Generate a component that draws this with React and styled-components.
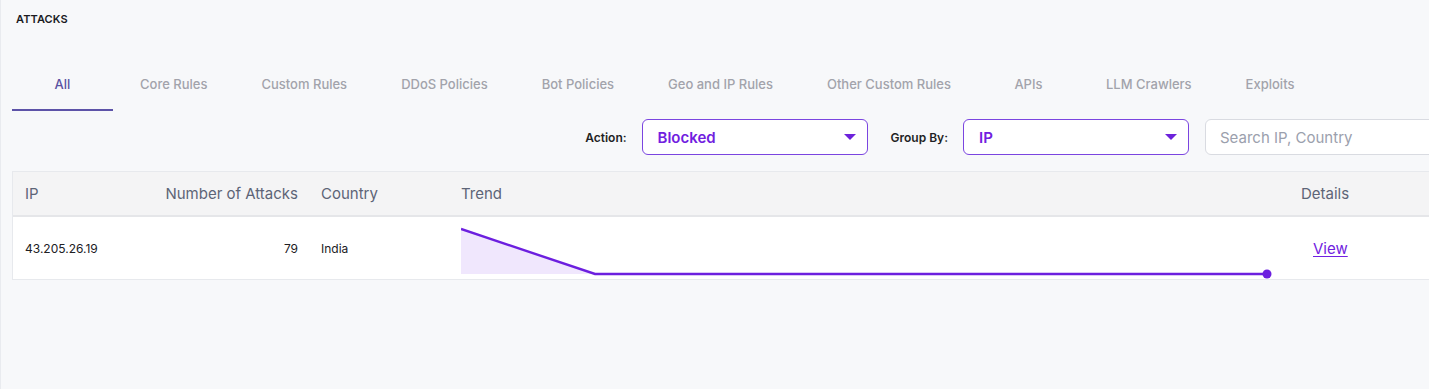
import styled, { createGlobalStyle } from 'styled-components'

const GlobalStyle = createGlobalStyle`
body {
 margin: 0;
 background: #f7f8fa;
 font-family: Inter, "Noto Sans", sans-serif;
 overflow: hidden;
}
`

const Page = styled.div`
width: 1450px;
min-height: 389px;
box-sizing: border-box;
padding: 12px 0 0 11px;
border-left: 1px solid #e9ebef;
`

const Title = styled.h1`
margin: 0 0 0 4px;
font-size: 11px;
line-height: 14px;
font-weight: 600;
color: #1b1b1f;
letter-spacing: 0.1px;
`

const TabBar = styled.div`
display: flex;
margin-top: 32px;
`

const Tab = styled.div`
min-width: 101px;
height: 53px;
box-sizing: border-box;
padding: 0 27px;
display: flex;
align-items: center;
justify-content: center;
font-size: 13px;
font-weight: 500;
color: ${p => (p.$active ? '#5a52a2' : '#a2a3ab')};
border-bottom: 2px solid ${p => (p.$active ? '#5d53a8' : 'transparent')};
white-space: nowrap;
`

const FilterRow = styled.div`
display: flex;
justify-content: flex-end;
align-items: center;
margin-top: 8px;
`

const Label = styled.span`
font-size: 12px;
font-weight: 600;
color: #1f1f24;
margin-right: 15px;
`

const Select = styled.div`
width: 226px;
height: 36px;
box-sizing: border-box;
border: 1px solid #7b45e0;
border-radius: 6px;
background: #fff;
display: flex;
align-items: center;
justify-content: space-between;
padding: 0 11px 0 15px;
margin-right: ${p => p.$gap}px;
font-size: 15px;
font-weight: 600;
color: #7120df;
`

const Caret = styled.span`
width: 0;
height: 0;
border-left: 6px solid transparent;
border-right: 6px solid transparent;
border-top: 6px solid #6d22db;
`

const Search = styled.div`
width: 245px;
height: 36px;
box-sizing: border-box;
border: 1px solid #d9dbe1;
border-radius: 6px;
background: #fff;
display: flex;
align-items: center;
padding-left: 14px;
font-size: 15px;
color: #9ba0ad;
`

const Table = styled.div`
margin-top: 16px;
border: 1px solid #e7e9ed;
border-right: none;
background: #fff;
`

const Row = styled.div`
display: grid;
grid-template-columns: 137px 159px 140px 840px 1fr;
height: ${p => p.$h}px;
background: ${p => (p.$head ? '#f4f4f5' : '#fff')};
border-bottom: ${p => (p.$head ? '2px solid #e5e6e9' : 'none')};
`

const Cell = styled.div`
display: flex;
align-items: ${p => p.$align || 'center'};
justify-content: ${p => (p.$right ? 'flex-end' : 'flex-start')};
padding: 0 ${p => (p.$right ? 11 : 0)}px 0 ${p => p.$pl ?? 12}px;
font-size: ${p => (p.$head ? 15 : 12)}px;
color: ${p => (p.$head ? '#5d6477' : '#202024')};
`

const ViewLink = styled.a`
font-size: 15px;
color: #7121e0;
text-decoration: underline;
text-underline-offset: 2px;
`

const tabs = ['All', 'Core Rules', 'Custom Rules', 'DDoS Policies', 'Bot Policies', 'Geo and IP Rules', 'Other Custom Rules', 'APIs', 'LLM Crawlers', 'Exploits']

function Trend() {
 return (
  <svg width="812" height="52" viewBox="0 0 812 52">
   <polygon points="0,2 134,47 0,47" fill="#f0e7fd" />
   <polyline points="0,2 134,47 806,47" fill="none" stroke="#6c1fdf" strokeWidth="2.4" />
   <circle cx="806" cy="47" r="4.5" fill="#6c1fdf" />
  </svg>
 )
}

function App() {
 return (
  <Page>
   <GlobalStyle />
   <Title>ATTACKS</Title>
   <TabBar>
    {tabs.map((t, i) => (
     <Tab key={t} $active={i === 0}>{t}</Tab>
    ))}
   </TabBar>
   <FilterRow>
    <Label>Action:</Label>
    <Select $gap={23}>Blocked<Caret /></Select>
    <Label>Group By:</Label>
    <Select $gap={16}>IP<Caret /></Select>
    <Search>Search IP, Country</Search>
   </FilterRow>
   <Table>
    <Row $head $h={43}>
     <Cell $head>IP</Cell>
     <Cell $head $right>Number of Attacks</Cell>
     <Cell $head>Country</Cell>
     <Cell $head>Trend</Cell>
     <Cell $head $pl={12}>Details</Cell>
    </Row>
    <Row $h={62}>
     <Cell>43.205.26.19</Cell>
     <Cell $right>79</Cell>
     <Cell>India</Cell>
     <Cell $align="flex-end"><Trend /></Cell>
     <Cell $pl={24}><ViewLink>View</ViewLink></Cell>
    </Row>
   </Table>
  </Page>
 )
}

export default App
